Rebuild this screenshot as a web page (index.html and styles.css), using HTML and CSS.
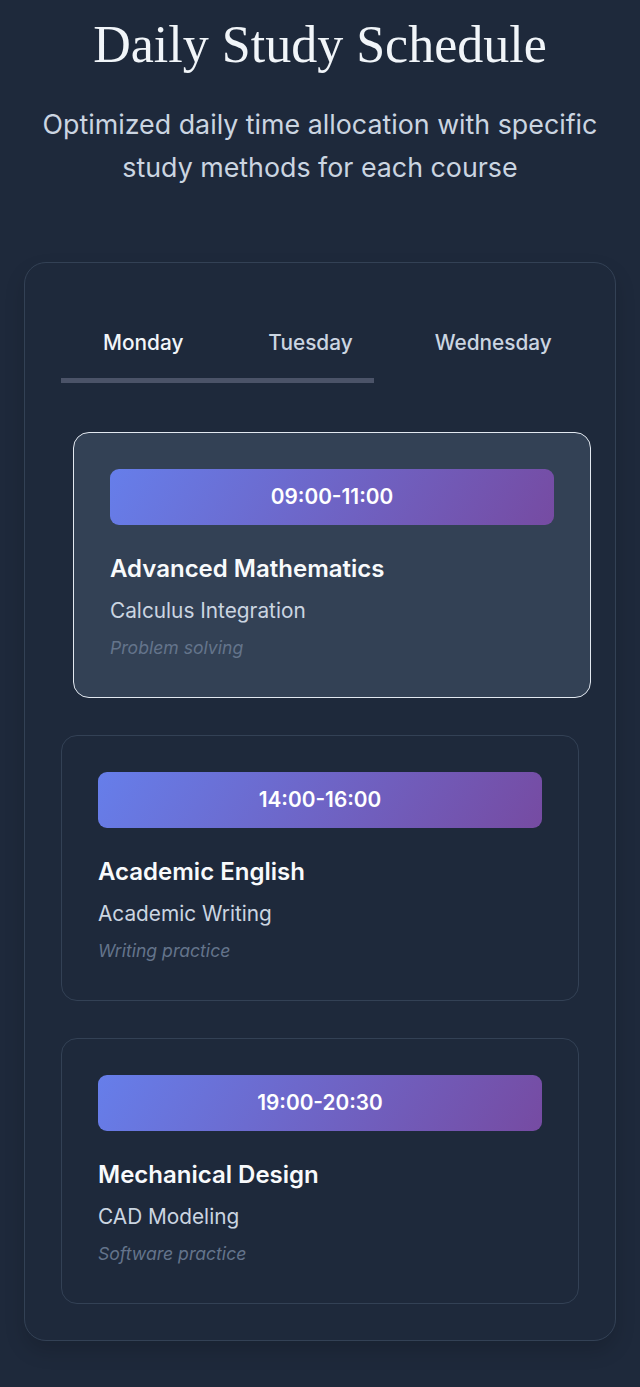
FILE: index.html
```html
<!DOCTYPE html>
<html lang="en">
<head>
	<meta charset="UTF-8">
	<title>Daily Study Schedule</title>
	<link rel="stylesheet" href="styles.css">
</head>
<body>
	<div class="page">
		<div class="header">
			<h1 class="title">Daily Study Schedule</h1>
			<p class="intro">Optimized daily time allocation with specific study methods for each course</p>
		</div>

		<div class="panel">
			<div class="tabs">
				<span class="tab active">Monday</span>
				<span class="tab">Tuesday</span>
				<span class="tab">Wednesday</span>
			</div>
			<div class="tab-bar"></div>

			<div class="slots">
				<div class="slot current">
					<div class="time">09:00-11:00</div>
					<h3 class="course">Advanced Mathematics</h3>
					<p class="topic">Calculus Integration</p>
					<p class="method">Problem solving</p>
				</div>
				<div class="slot">
					<div class="time">14:00-16:00</div>
					<h3 class="course">Academic English</h3>
					<p class="topic">Academic Writing</p>
					<p class="method">Writing practice</p>
				</div>
				<div class="slot">
					<div class="time">19:00-20:30</div>
					<h3 class="course">Mechanical Design</h3>
					<p class="topic">CAD Modeling</p>
					<p class="method">Software practice</p>
				</div>
			</div>
		</div>
	</div>
</body>
</html>
```

FILE: styles.css
```css
* {
	margin: 0;
	padding: 0;
	box-sizing: border-box;
}
body {
	background: #1e293b;
	font-family: Inter, "Noto Sans", sans-serif;
	color: #f1f5f9;
}
.page {
	padding: 14px 24px 45px;
}
.header {
	text-align: center;
}
.title {
	font-family: "Liberation Serif", "DejaVu Serif", serif;
	font-size: 52px;
	font-weight: normal;
	line-height: 62px;
	color: #f1f5f9;
}
.intro {
	margin: 27px -4px 0;
	font-size: 26.8px;
	line-height: 43px;
	color: #cbd5e1;
}
.panel {
	margin-top: 73px;
	border: 1px solid #334155;
	border-radius: 22px;
	padding: 30px 36px 36px;
	box-shadow: 0 10px 20px rgba(0, 0, 0, 0.15);
}
.tabs {
	display: flex;
}
.tab {
	font-size: 20.8px;
	line-height: 26px;
	font-weight: 500;
	color: #cbd5e1;
	margin-top: 37px;
}
.tab:nth-child(1) {
	margin-left: 42px;
}
.tab:nth-child(2) {
	margin-left: 85px;
}
.tab:nth-child(3) {
	margin-left: 82px;
}
.tab.active {
	color: #f1f5f9;
}
.tab-bar {
	width: 313px;
	height: 5px;
	margin-top: 22px;
	background: #4b5368;
}
.slots {
	margin-top: 49px;
	display: flex;
	flex-direction: column;
	gap: 37px;
}
.slot {
	border: 1px solid #334155;
	border-radius: 16px;
	padding: 36px;
	height: 266px;
}
.slot.current {
	background: #334155;
	border-color: #e2e8f0;
	transform: translateX(12px);
}
.time {
	height: 56px;
	line-height: 56px;
	border-radius: 9px;
	text-align: center;
	font-size: 20.8px;
	font-weight: 600;
	color: #fff;
	background: linear-gradient(120deg, #667eea 0%, #764ba2 100%);
}
.course {
	margin-top: 28px;
	font-size: 24px;
	line-height: 32px;
	font-weight: 600;
	color: #f8fafc;
}
.topic {
	margin-top: 11px;
	font-size: 20.8px;
	line-height: 30px;
	color: #cbd5e1;
}
.method {
	margin-top: 9px;
	font-size: 17.6px;
	line-height: 26px;
	font-style: italic;
	color: #64748b;
}
```
